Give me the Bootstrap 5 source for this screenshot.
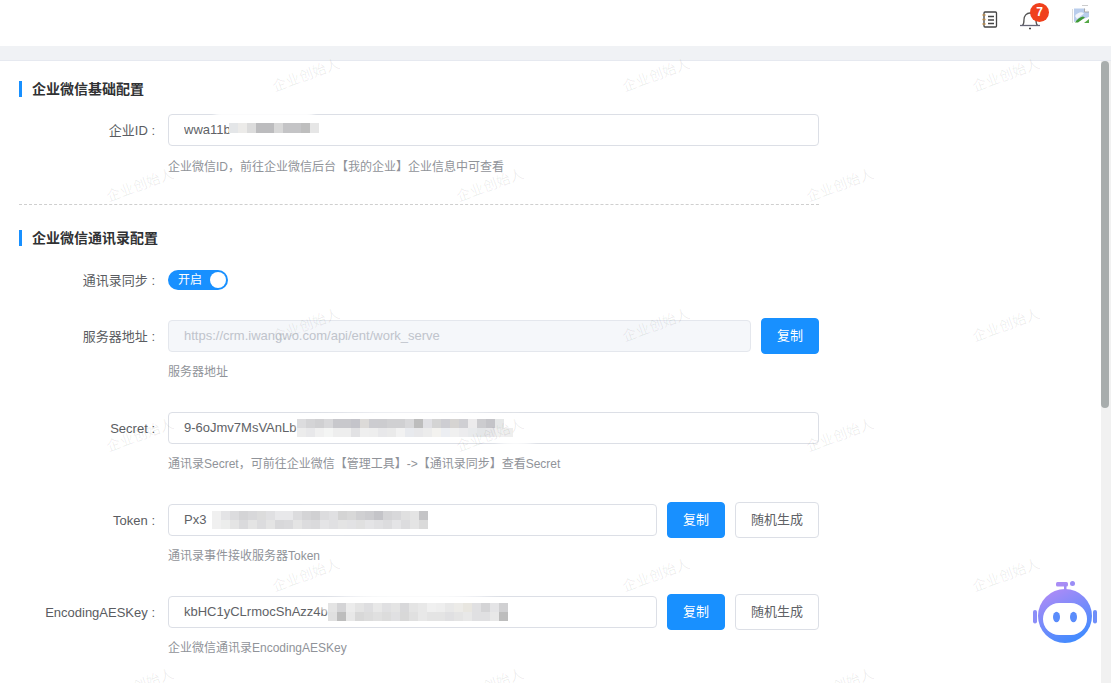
<!DOCTYPE html>
<html lang="zh-CN">
<head>
<meta charset="utf-8">
<title>企业微信配置</title>
<link href="https://cdn.jsdelivr.net/npm/bootstrap@5.3.0/dist/css/bootstrap.min.css" rel="stylesheet">
<style>
html,body{height:683px;overflow:hidden;}
body{background:#fff;font-family:"Liberation Sans","Noto Sans CJK SC",sans-serif;font-size:13px;color:#606266;position:relative;}
.top-strip{height:46px;padding-right:21px;}
.gray-band{height:15px;background:#f0f2f5;border-bottom:1px solid #e6e9f0;}
.page-main{height:622px;}
.form-pane{padding:20px 0 0 19px;overflow:hidden;}
.form-inner{width:800px;}
.sec-head{border-left:3px solid #1890ff;padding-left:10px;font-size:14px;font-weight:700;line-height:16px;color:#303133;margin-bottom:15px;}
.sec-head.sec-second{margin-bottom:16px;}
.cfg-row{min-height:36px;}
.cfg-label{width:136px;flex:none;text-align:right;margin-right:13px;color:#5a5c61;line-height:20px;padding-top:2px;}
.cfg-field{position:relative;}
.cfg-input.form-control{height:32px;border:1px solid #dcdfe6;border-radius:4px;padding:0 15px 1px;font-size:13px;color:#606266;background:transparent;box-shadow:none;}
.cfg-input.form-control:disabled{background:#f5f7fa;color:#c0c4cc;border-color:#e4e7ed;opacity:1;}
.cfg-hint{margin:8px 0 28px 149px;font-size:12px;line-height:20px;color:#909399;}
.cfg-hint.hint-first{margin:9px 0 27px 149px;}
.act-btn.btn{height:36px;font-size:13px;padding:0;border-radius:4px;flex:none;}
.btn-copy.btn{width:58px;background:#1890ff;border-color:#1890ff;color:#fff;margin-left:10px;}
.btn-gen.btn{width:84px;background:#fff;border:1px solid #dcdfe6;color:#606266;margin-left:10px;}
.dash-line{border-top:1px dashed #cfcfcf;margin-bottom:25px;}
.sw-pill{width:60px;height:20px;border-radius:10px;background:#1890ff;color:#fff;font-size:12px;line-height:21px;padding-left:10px;position:relative;}
.sw-knob{position:absolute;right:2px;top:2px;width:16px;height:16px;border-radius:50%;background:#fff;}
.row-gap{margin-bottom:20px;}
.scroll-track{width:10px;background:#f1f1f1;flex:none;}
.scroll-thumb{width:8px;height:347px;background:#a8adad;border-radius:4px;}
.mosaic{position:absolute;pointer-events:none;}
.smear{position:absolute;background:#fff;border-radius:50%;filter:blur(2px);pointer-events:none;opacity:.9;}
.wm-layer{position:absolute;inset:0;pointer-events:none;overflow:hidden;}
.wm-text{position:absolute;width:80px;text-align:center;font-size:14px;line-height:20px;color:rgba(0,0,0,.075);transform:translate(-50%,-50%) rotate(-20deg);white-space:nowrap;}
.top-badge{position:absolute;left:1030px;top:3px;width:19px;height:19px;border-radius:50%;background:#f0401c;color:#fff;font-size:12px;font-weight:700;line-height:19px;text-align:center;}
.top-icon{position:absolute;}
.bot-icon{position:absolute;left:1030px;top:578px;}
</style>
</head>
<body>
<header class="top-strip"></header>
<svg class="top-icon" style="left:981px;top:10px" width="18" height="18" viewBox="0 0 18 18" fill="none" stroke="#444" stroke-width="1.3"><rect x="3" y="2" width="12.500" height="15" rx="1"/><path d="M1.500 5h3M1.500 9.500h3M1.500 14h3" stroke="#b98a4a"/><path d="M7 6.500h6M7 10h6M7 13.500h6"/></svg>
<svg class="top-icon" style="left:1018px;top:8px" width="24" height="24" viewBox="0 0 24 24" fill="none" stroke="#555" stroke-width="1.3"><path d="M4.500 17.500c1.500-1.500 1.500-3 1.500-6 0-3.500 2.500-6.500 6-6.500s6 3 6 6.500c0 3 0 4.500 1.500 6"/><path d="M2 17.500h20" stroke="#667"/><path d="M11 20.500h2" stroke="#444"/></svg>
<span class="top-badge">7</span>
<svg class="top-icon" style="left:1071px;top:4px" width="20" height="21" viewBox="0 0 20 21" fill="none"><path d="M3 4.500h10.500l4.500 3.500v5L3 18z" fill="#b9cdec"/><path d="M4 12c3-4 7-4.500 9-2.500l-7 5.500z" fill="#f2f5fb"/><path d="M11 1.500h6" stroke="#ccc"/><path d="M1.500 5v14" stroke="#ddd"/><path d="M13.500 4.500v3.500h4.500" fill="#fff" stroke="#aaa"/><path d="M4 18.500c2-3 5-5.500 8-6l2 1-7 5z" fill="#3f9a36"/><path d="M8 20l10-7v1.500l-8 6z" fill="#fff"/><path d="M13 19l5-4v4z" fill="#54a845"/></svg>
<div class="gray-band"></div>
<main class="page-main d-flex">
  <div class="form-pane flex-grow-1">
    <div class="form-inner">
      <h2 class="sec-head">企业微信基础配置</h2>
      <div class="cfg-row d-flex align-items-center">
        <label class="cfg-label">企业ID :</label>
        <div class="cfg-field flex-grow-1"><input class="cfg-input form-control" value="wwa11b">
          <span class="smear" style="left:46px;top:-9px;width:100px;height:22px"></span>
          <svg class="mosaic" data-c="e4e6e8,ecebe9,dcdcdc,bcbcbe,bcbcbe,d8d8d8,c4c4c6,c4c4c6,bebebe,e6e6e6" style="left:61px;top:9px" width="90" height="10"></svg>
        </div>
      </div>
      <p class="cfg-hint hint-first">企业微信ID，前往企业微信后台【我的企业】企业信息中可查看</p>
      <div class="dash-line"></div>
      <h2 class="sec-head sec-second">企业微信通讯录配置</h2>
      <div class="cfg-row d-flex align-items-center row-gap">
        <label class="cfg-label">通讯录同步 :</label>
        <div class="sw-pill">开启<span class="sw-knob"></span></div>
      </div>
      <div class="cfg-row d-flex align-items-center">
        <label class="cfg-label">服务器地址 :</label>
        <div class="cfg-field flex-grow-1"><input class="cfg-input form-control" disabled value="https://crm.iwangwo.com/api/ent/work_serve"></div>
        <button class="act-btn btn btn-copy">复制</button>
      </div>
      <p class="cfg-hint">服务器地址</p>
      <div class="cfg-row d-flex align-items-center">
        <label class="cfg-label">Secret :</label>
        <div class="cfg-field flex-grow-1"><input class="cfg-input form-control" value="9-6oJmv7MsVAnLb">
          <span class="smear" style="left:125px;top:0;width:245px;height:24px"></span>
          <span class="smear" style="left:320px;top:4px;width:55px;height:30px"></span>
          <svg class="mosaic" data-c="dcdcde,d4d4d6,d0d0d2,d8d8da,c8c8cc,c8c8cc,c4c4ca,dcdad8,ccccd0,cccccf,d0d0d2,d0d0d2,d8d8da,bdbdbd,e0e0e4,d4d4d4,cdcdd2,d6d4d2,cfcfd3,ecebec,cccccf,c4c4c8,e6e8e8|ececec,e8e8ea,f0f0f0,f4f5f4,eeeeee,eeeeee,e2e2e4,efefef,eeeeee,e8e8ea,eaeaea,f2f2f2,e8eaee,e8e8ea,ececec,f3f2ef,eceef2,f0f0f0,ececee,e8eaec,e4e6e8,e8e8ea,f0f0f0,eeeeee" style="left:129px;top:7px" width="216" height="18"></svg>
        </div>
      </div>
      <p class="cfg-hint">通讯录Secret，可前往企业微信【管理工具】-&gt;【通讯录同步】查看Secret</p>
      <div class="cfg-row d-flex align-items-center">
        <label class="cfg-label">Token :</label>
        <div class="cfg-field flex-grow-1"><input class="cfg-input form-control" value="Px3">
          <span class="smear" style="left:42px;top:4px;width:225px;height:24px"></span>
          <svg class="mosaic" data-c="f0f0f0,e4e4e6,dcdcde,d4d4d6,d8d8da,dcdcdc,e0e0e2,e8e8ea,e8e8ea,dcdcde,d4d4d6,d0d0d2,dcdcde,e0e0e2,d4d4d4,d8d8d8,d0d0d2,cccccf,c4c4c8,d4d4d6,d8d8da,e0e0e0,e4e4e4,c4c4c6|f0f0f0,ecedec,e4e4e4,dadadc,e4e4e4,dcdcde,e4e4e4,d8d8da,dadadc,e4e4e4,dcdcde,dadadc,e4e4e6,e0e0e2,e4e4e4,e2e2e4,e0e0e0,e4e4e6,e0e0e2,dcdcde,e4e4e6,dcdcde,e4e4e4,dadada" style="left:44px;top:7px" width="216" height="18"></svg>
        </div>
        <button class="act-btn btn btn-copy">复制</button>
        <button class="act-btn btn btn-gen">随机生成</button>
      </div>
      <p class="cfg-hint">通讯录事件接收服务器Token</p>
      <div class="cfg-row d-flex align-items-center">
        <label class="cfg-label">EncodingAESKey :</label>
        <div class="cfg-field flex-grow-1"><input class="cfg-input form-control" value="kbHC1yCLrmocShAzz4b">
          <span class="smear" style="left:150px;top:-3px;width:190px;height:26px"></span>
          <svg class="mosaic" data-c="e4e4e4,d4d4d6,ececec,e4e4e4,dedee0,e8e8e8,e0e0e2,e4e4e4,d8d8da,e4e4e4,e8e8e8,f0f0f0,eeeeee,e8e8e8,ecebe8,e8e6e0,e0e0e2,d4d4d6,e4e4e6,d0d0d2|e0e0e0,bdbdbd,e8e8e8,d8d8d8,dcdcdc,e0e0e0,dcdcdc,e0e0e2,d8d8d8,e0e0e0,e8e8e8,e4e4e4,e4e4e4,e0e0e2,e4e4e4,e8e8e8,e0e0e2,e0e0e2,e8e8e8,bdbdbd" style="left:160px;top:7px" width="180" height="18"></svg>
        </div>
        <button class="act-btn btn btn-copy">复制</button>
        <button class="act-btn btn btn-gen">随机生成</button>
      </div>
      <p class="cfg-hint">企业微信通讯录EncodingAESKey</p>
    </div>
  </div>
  <aside class="scroll-track"><div class="scroll-thumb"></div></aside>
</main>
<div class="wm-layer" id="wm"></div>
<svg class="bot-icon" width="70" height="68" viewBox="0 0 70 68" fill="none">
  <defs><linearGradient id="bg" x1="0.2" y1="0" x2="0.7" y2="1"><stop offset="0" stop-color="#b08bf6"/><stop offset="1" stop-color="#3d8bff"/></linearGradient></defs>
  <rect x="26" y="4" width="12" height="4.500" rx="1.500" fill="#a98df5"/>
  <rect x="34" y="6" width="2.500" height="7" fill="#a08df5"/>
  <circle cx="42.500" cy="5.500" r="2.500" fill="#9a8df6"/>
  <rect x="3" y="32" width="4" height="13.500" rx="2" fill="#8c8ef8"/>
  <rect x="63" y="32" width="4" height="13.500" rx="2" fill="#6f8ef9"/>
  <circle cx="35" cy="38" r="27" fill="url(#bg)"/>
  <rect x="13" y="25" width="44" height="32" rx="16" fill="#fff"/>
  <ellipse cx="26.500" cy="39" rx="3.500" ry="5.200" fill="#5a8cfb"/>
  <ellipse cx="43.500" cy="39" rx="3.500" ry="5.200" fill="#5a8cfb"/>
</svg>
<script>
document.querySelectorAll('svg.mosaic').forEach(function(s){
  s.getAttribute('data-c').split('|').forEach(function(row,r){
    row.split(',').forEach(function(c,i){
      var e=document.createElementNS('http://www.w3.org/2000/svg','rect');
      e.setAttribute('x',i*9);e.setAttribute('y',r*9);e.setAttribute('width',9);e.setAttribute('height',r==0&&s.getAttribute('height')=='10'?10:9);e.setAttribute('fill','#'+c);s.appendChild(e);
    });
  });
});
var wm=document.getElementById('wm');
[[75,306],[75,656],[75,1006],[185,140],[185,490],[185,840],[325,306],[325,656],[325,1006],[435,140],[435,490],[435,840],[575,306],[575,656],[575,1006],[685,140],[685,490],[685,840]].forEach(function(p){
  var d=document.createElement('span');d.className='wm-text';d.textContent='企业创始人';d.style.top=p[0]+'px';d.style.left=p[1]+'px';wm.appendChild(d);
});
</script>
</body>
</html>
